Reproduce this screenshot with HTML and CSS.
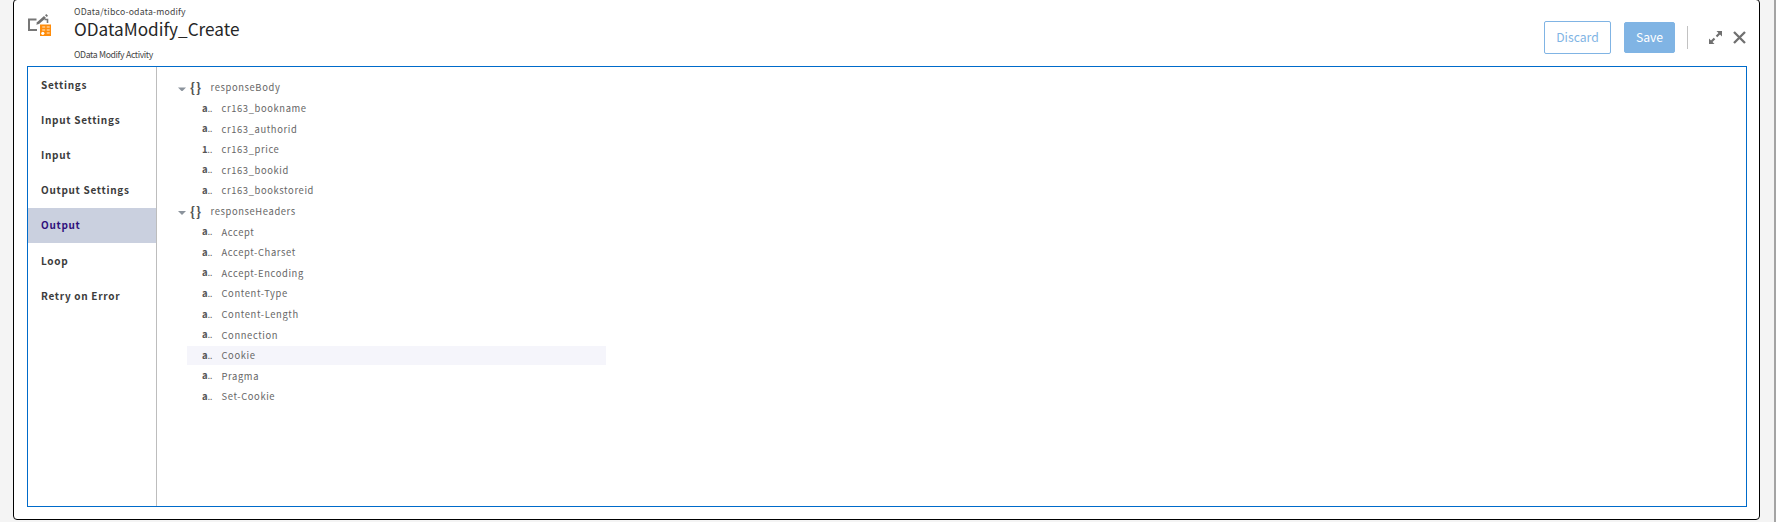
FILE: index.html
```
<!DOCTYPE html>
<html lang="en">
<head>
<meta charset="utf-8">
<title>ODataModify_Create</title>
<link rel="stylesheet" href="styles.css">
</head>
<body>
<main class="dialog">
  <header class="header">
    <svg class="activity-icon" width="24" height="24" viewBox="0 0 24 24">
      <path d="M9.500 6.500H2V17H10" fill="none" stroke="#777" stroke-width="2"/>
      <path d="M17.500 6.500H20.500V10" fill="none" stroke="#777" stroke-width="1.600"/>
      <path d="M10 9.300L17 3L19 5L12 11.100L9.300 11.800Z" fill="#707070"/>
      <path d="M18 2.200L19.300 1L21 2.800L19.800 4.100Z" fill="#707070"/>
      <rect x="13" y="11.500" width="11" height="11.500" fill="#ff8c0a"/>
      <path d="M15.200 14h3M19.700 14h3M15.200 17h3M19.700 17h3M19.700 20h3" stroke="#ffe9cf" stroke-width="1.100"/>
      <circle cx="15.800" cy="20.300" r="1.600" fill="#fff"/>
    </svg>
    <div class="titles">
      <div class="path">OData/tibco-odata-modify</div>
      <h1 class="title">ODataModify_Create</h1>
      <div class="subtitle">OData Modify Activity</div>
    </div>
    <div class="actions">
      <button class="btn discard">Discard</button>
      <button class="btn save">Save</button>
      <span class="separator"></span>
      <svg class="expand" width="13" height="13" viewBox="0 0 13 13"><path d="M7.500 0H13V5.500ZM0 7.500V13H5.500Z" fill="#707070"/><path d="M2 11L5.500 7.500M7.500 5.500L11 2" stroke="#707070" stroke-width="2.200"/></svg>
      <svg class="close" width="13" height="13" viewBox="0 0 13 13"><path d="M1 1L12 12M12 1L1 12" stroke="#707070" stroke-width="2.300"/></svg>
    </div>
  </header>
  <section class="panel">
    <nav class="nav">
      <a class="nav-item">Settings</a>
      <a class="nav-item">Input Settings</a>
      <a class="nav-item">Input</a>
      <a class="nav-item">Output Settings</a>
      <a class="nav-item active">Output</a>
      <a class="nav-item after">Loop</a>
      <a class="nav-item after">Retry on Error</a>
    </nav>
    <div class="tree">
      <div class="row parent"><span class="arrow"></span><span class="braces">{}</span><span>responseBody</span></div>
      <div class="row"><span class="type">a<i>..</i></span><span>cr163_bookname</span></div>
      <div class="row"><span class="type">a<i>..</i></span><span>cr163_authorid</span></div>
      <div class="row"><span class="type">1<i>..</i></span><span>cr163_price</span></div>
      <div class="row"><span class="type">a<i>..</i></span><span>cr163_bookid</span></div>
      <div class="row"><span class="type">a<i>..</i></span><span>cr163_bookstoreid</span></div>
      <div class="row parent"><span class="arrow"></span><span class="braces">{}</span><span>responseHeaders</span></div>
      <div class="row"><span class="type">a<i>..</i></span><span>Accept</span></div>
      <div class="row"><span class="type">a<i>..</i></span><span>Accept-Charset</span></div>
      <div class="row"><span class="type">a<i>..</i></span><span>Accept-Encoding</span></div>
      <div class="row"><span class="type">a<i>..</i></span><span>Content-Type</span></div>
      <div class="row"><span class="type">a<i>..</i></span><span>Content-Length</span></div>
      <div class="row"><span class="type">a<i>..</i></span><span>Connection</span></div>
      <div class="row hover"><span class="type">a<i>..</i></span><span>Cookie</span></div>
      <div class="row"><span class="type">a<i>..</i></span><span>Pragma</span></div>
      <div class="row"><span class="type">a<i>..</i></span><span>Set-Cookie</span></div>
    </div>
  </section>
</main>
</body>
</html>
```
FILE: styles.css
```
* { box-sizing: border-box; }
body {
  margin: 0;
  height: 522px;
  padding: 0 14px 2px 13px;
  border-right: 2px solid #a4a4a4;
  background: #f4f4f4;
  overflow: hidden;
  font-family: "Noto Sans CJK SC", "Noto Sans", sans-serif;
}
.dialog {
  height: 521px;
  margin-top: -1px;
  padding: 0 12px 12px 13px;
  border: 1px solid #000;
  border-radius: 4px;
  background: #fff;
}
.header { display: flex; height: 66px; }
.activity-icon { margin: 13px 0 0 0; }
.titles { margin-left: 23px; color: #444; font-size: 8.700px; line-height: 12px; }
.path { padding-top: 6px; letter-spacing: .2px; }
.title { margin: -1px 0 0; height: 24px; color: #262626; font-size: 17.200px; font-weight: 400; line-height: 23px; }
.subtitle { padding-top: 8px; letter-spacing: -.39px; word-spacing: .3px; }
.actions { display: flex; align-items: center; height: 34px; margin: 20px 1px 0 auto; }
.btn { height: 33px; padding: 0; border: 1px solid #80b4e4; border-radius: 2px; font: 12.200px/30px "Noto Sans CJK SC", sans-serif; }
.discard { width: 67px; background: #fff; color: #80b4e4; }
.save { width: 51px; height: 31px; margin-left: 13px; background: #80b4e4; color: #fff; line-height: 28px; }
.separator { width: 1px; height: 23px; margin: 0 21px 0 12px; background: #c2c2c2; }
.close { margin-left: 11px; }
.panel { display: flex; height: 441px; border: 1px solid #006bca; }
.nav { width: 129px; padding-top: 1px; border-right: 1px solid #bdbdbd; }
.nav-item { display: block; height: 35px; padding-left: 13px; color: #3c3c3c; font-size: 10px; font-weight: 600; letter-spacing: .7px; line-height: 33px; }
.nav-item.active { background: #cad0df; color: #30107c; }
.nav-item.after { line-height: 35px; }
.tree { width: 449px; padding: 10.700px 0 0 30px; color: #666; font-size: 9.400px; letter-spacing: .62px; }
.row { display: flex; align-items: center; height: 20.600px; padding-left: 15px; line-height: 19px; }
.row.parent { padding-left: 0; }
.row.hover { height: 19px; margin: .8px 0; background: #f5f5fb; }
.arrow { width: 8px; height: 4px; margin: 3px 4px 0 -9px; background: #8b939c; clip-path: polygon(0 0, 100% 0, 50% 100%); }
.braces { width: 20.500px; color: #555; font-size: 13.500px; font-weight: 700; letter-spacing: 1px; }
.type { width: 19.500px; color: #555; font-size: 9.500px; font-weight: 700; letter-spacing: 0; }
.type i { font-size: 7px; font-style: normal; }
```
